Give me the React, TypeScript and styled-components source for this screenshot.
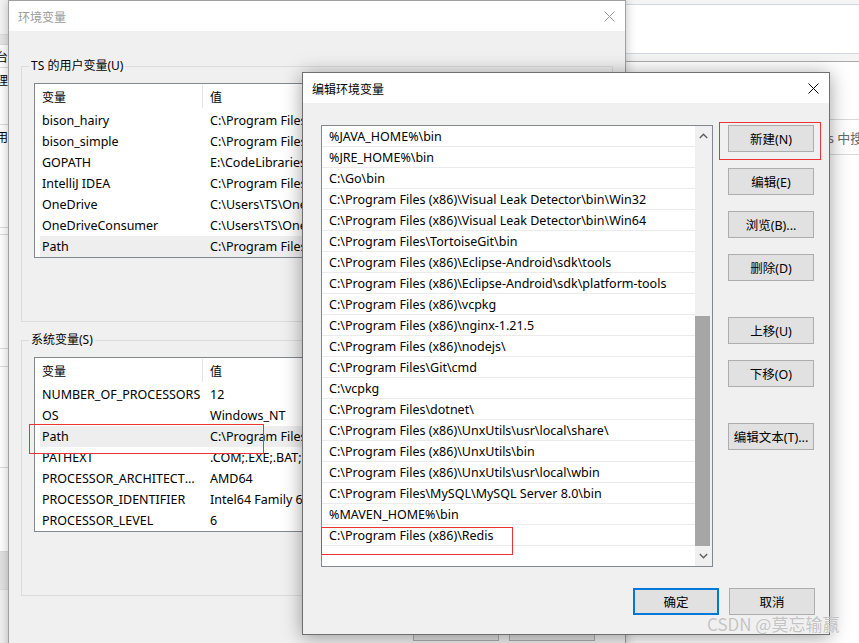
import React from "react";
import styled, { createGlobalStyle } from "styled-components";

const GlobalStyle = createGlobalStyle`
  html, body { margin: 0; padding: 0; }
  body {
    font-family: "Noto Sans", "Noto Sans CJK SC", sans-serif;
    font-size: 12.5px;
    color: #000;
    background: #fff;
  }
  * { box-sizing: border-box; }
`;

const userVars = [
  ["bison_hairy", "C:\\Program Files\\bison\\bison.hairy"],
  ["bison_simple", "C:\\Program Files\\bison\\bison.simple"],
  ["GOPATH", "E:\\CodeLibraries\\Go"],
  ["IntelliJ IDEA", "C:\\Program Files\\JetBrains\\IntelliJ IDEA\\bin;"],
  ["OneDrive", "C:\\Users\\TS\\OneDrive"],
  ["OneDriveConsumer", "C:\\Users\\TS\\OneDrive"],
  ["Path", "C:\\Program Files\\Java\\jdk\\bin;"],
];

const sysVars = [
  ["NUMBER_OF_PROCESSORS", "12"],
  ["OS", "Windows_NT"],
  ["Path", "C:\\Program Files\\Java\\jdk\\bin;"],
  ["PATHEXT", ".COM;.EXE;.BAT;.CMD;.VBS;.VBE;.JS"],
  ["PROCESSOR_ARCHITECTURE", "AMD64"],
  ["PROCESSOR_IDENTIFIER", "Intel64 Family 6 Model 165"],
  ["PROCESSOR_LEVEL", "6"],
];

const paths = [
  "%JAVA_HOME%\\bin",
  "%JRE_HOME%\\bin",
  "C:\\Go\\bin",
  "C:\\Program Files (x86)\\Visual Leak Detector\\bin\\Win32",
  "C:\\Program Files (x86)\\Visual Leak Detector\\bin\\Win64",
  "C:\\Program Files\\TortoiseGit\\bin",
  "C:\\Program Files (x86)\\Eclipse-Android\\sdk\\tools",
  "C:\\Program Files (x86)\\Eclipse-Android\\sdk\\platform-tools",
  "C:\\Program Files (x86)\\vcpkg",
  "C:\\Program Files (x86)\\nginx-1.21.5",
  "C:\\Program Files (x86)\\nodejs\\",
  "C:\\Program Files\\Git\\cmd",
  "C:\\vcpkg",
  "C:\\Program Files\\dotnet\\",
  "C:\\Program Files (x86)\\UnxUtils\\usr\\local\\share\\",
  "C:\\Program Files (x86)\\UnxUtils\\bin",
  "C:\\Program Files (x86)\\UnxUtils\\usr\\local\\wbin",
  "C:\\Program Files\\MySQL\\MySQL Server 8.0\\bin",
  "%MAVEN_HOME%\\bin",
  "C:\\Program Files (x86)\\Redis",
  "",
];

const sideItems = [
  { h: 35, bg: "#f4f4f4", text: "" },
  { h: 10, bg: "#e6e6e6", text: "" },
  { h: 23, bg: "#fff", text: "台" },
  { h: 57, bg: "#fff", text: "理" },
  { h: 103, bg: "#fff", text: "用," },
  { h: 7, bg: "#fff", text: "" },
  { h: 114, bg: "#fff", text: "" },
  { h: 18, bg: "#fff", text: "" },
  { h: 101, bg: "#fff", text: "" },
  { h: 84, bg: "#fff", text: "" },
  { h: 38, bg: "#e2e2e2", text: "" },
  { h: 60, bg: "#f0f0f0", text: "" },
];

const Desktop = styled.div`
  position: relative;
  width: 859px;
  height: 643px;
  overflow: hidden;
  background: #fff;
`;

/* window in the back */
const Backdrop = styled.div`
  position: absolute;
  inset: 0;
  display: flex;
`;

const SidePane = styled.div`
  width: 8px;
  flex: none;
  overflow: hidden;
  display: flex;
  flex-direction: column;
`;

const SideItem = styled.div<{ $h: number; $bg: string }>`
  height: ${p => p.$h}px;
  background: ${p => p.$bg};
  border-bottom: 1px solid #dcdcdc;
  flex: none;
  font-size: 12px;
  line-height: 20px;
  padding-top: 2px;
  margin-left: -4px;
  white-space: nowrap;
  font-family: "Noto Sans CJK SC", sans-serif;
`;

const MainPane = styled.div`
  flex: 1;
  min-width: 0;
  display: flex;
  flex-direction: column;
`;

const TopBar = styled.div`
  height: 62px;
  padding-top: 4px;
  background: #f4f4f4;
  border-bottom: 1px solid #a9a9a9;
`;

const TopBarInner = styled.div`
  height: 50px;
  background: #fff;
  border-top: 1px solid #cfd7e2;
  border-bottom: 1px solid #cfd7e2;
`;

const SearchRow = styled.div`
  padding-top: 57px;
  display: flex;
`;

const SearchBox = styled.div`
  flex: none;
  margin-left: 735px;
  width: 200px;
  height: 36px;
  border: 1px solid #d9d9d9;
  padding-left: 18px;
  display: flex;
  align-items: center;
  color: #6a6a6a;
  font-size: 13px;
  white-space: nowrap;
`;

/* generic window chrome */
const Window = styled.div<{ $x: number; $y: number; $w: number; $h: number; $active?: boolean }>`
  position: absolute;
  left: ${p => p.$x}px;
  top: ${p => p.$y}px;
  width: ${p => p.$w}px;
  height: ${p => p.$h}px;
  background: #f0f0f0;
  border: 1px solid ${p => (p.$active ? "#6f6f6f" : "#a0a0a0")};
  box-shadow: ${p => (p.$active ? "0 2px 18px rgba(0,0,0,0.38)" : "0 0 10px rgba(0,0,0,0.25)")};
  display: flex;
  flex-direction: column;
`;

const TitleBar = styled.div<{ $active?: boolean }>`
  height: 30px;
  flex: none;
  background: #fff;
  display: flex;
  align-items: center;
  justify-content: space-between;
  padding: 0 10px 0 9px;
  color: ${p => (p.$active ? "#000" : "#9a9a9a")};
  font-family: "Noto Sans CJK SC", sans-serif;
  font-size: 12px;
`;

const CloseIcon: React.FC<{ color: string }> = ({ color }) => (
  <svg width="11" height="11" viewBox="0 0 11 11">
    <path d="M0.5 0.5 L10.5 10.5 M10.5 0.5 L0.5 10.5" stroke={color} strokeWidth="1" fill="none" />
  </svg>
);

/* 环境变量 dialog */
const EnvBody = styled.div`
  padding: 0 12px;
  display: flex;
  flex-direction: column;
`;

const Group = styled.fieldset<{ $top: number }>`
  margin: ${p => p.$top}px 0 0 0;
  padding: 9px 12px 0 12px;
  border: 1px solid #dcdcdc;
  height: 264px;
  min-width: 0;
`;

const Legend = styled.legend`
  margin-left: -5px;
  padding: 0 2px;
  line-height: 16px;
  font-size: 12px;
  font-family: "Noto Sans", "Noto Sans CJK SC", sans-serif;
`;

const VarList = styled.div`
  height: 175px;
  background: #fff;
  border: 1px solid #828790;
  overflow: hidden;
`;

const VarHeader = styled.div`
  height: 26px;
  display: grid;
  grid-template-columns: 168px 1fr;
  align-items: start;
`;

const HeaderCell = styled.div<{ $divider?: boolean }>`
  margin-top: 1px;
  padding-left: 7px;
  height: 23px;
  line-height: 23px;
  font-size: 12px;
  border-right: ${p => (p.$divider ? "1px solid #e5e5e5" : "none")};
  font-family: "Noto Sans CJK SC", sans-serif;
`;

const VarRow = styled.div<{ $selected?: boolean }>`
  height: 21px;
  margin-left: 5px;
  display: grid;
  grid-template-columns: 168px 1fr;
  align-items: center;
  background: ${p => (p.$selected ? "#eeeeee" : "transparent")};
  white-space: nowrap;
`;

const Cell = styled.div`
  padding: 0 6px 0 2px;
  overflow: hidden;
  text-overflow: ellipsis;
  line-height: 21px;
`;

const Footer = styled.div<{ $top: number; $right: number }>`
  display: flex;
  justify-content: flex-end;
  gap: 10px;
  padding: ${p => p.$top}px ${p => p.$right}px 0 0;
`;

const Button = styled.button<{ $primary?: boolean }>`
  width: 86px;
  height: 27px;
  padding: 0;
  background: #e1e1e1;
  border: ${p => (p.$primary ? "2px solid #0078d7" : "1px solid #adadad")};
  font-family: "Noto Sans", "Noto Sans CJK SC", sans-serif;
  font-size: 12.5px;
  color: #000;
  flex: none;
`;

/* 编辑环境变量 dialog */
const EditBody = styled.div`
  padding: 22px 14px 0 18px;
  display: grid;
  grid-template-columns: 392px 86px;
  column-gap: 15px;
`;

const PathList = styled.div`
  height: 442px;
  background: #fff;
  border: 1px solid #828790;
  display: flex;
  overflow: hidden;
`;

const PathRows = styled.div`
  flex: 1;
  overflow: hidden;
`;

const PathRow = styled.div`
  height: 21px;
  border-bottom: 1px solid #ebebeb;
  padding: 1px 0 0 7px;
  line-height: 20px;
  white-space: nowrap;
`;

const ScrollBar = styled.div`
  width: 17px;
  flex: none;
  background: #f0f0f0;
  display: flex;
  flex-direction: column;
`;

const ScrollArrow = styled.div`
  height: 20px;
  flex: none;
  display: flex;
  align-items: center;
  justify-content: center;
`;

const ScrollTrack = styled.div`
  flex: 1;
  display: flex;
  flex-direction: column;
  justify-content: flex-end;
`;

const ScrollThumb = styled.div`
  height: 230px;
  margin: 0 2px 0 0;
  background: #a6a6a6;
`;

const ButtonColumn = styled.div`
  display: flex;
  flex-direction: column;
  gap: 16px;
`;

const ButtonSpacer = styled.div`
  height: 4px;
`;

const Chevron: React.FC<{ up?: boolean }> = ({ up }) => (
  <svg width="9" height="6" viewBox="0 0 9 6">
    <polyline
      points={up ? "0.8,5 4.5,1.3 8.2,5" : "0.8,1 4.5,4.7 8.2,1"}
      stroke="#606060"
      strokeWidth="1.4"
      fill="none"
    />
  </svg>
);

/* annotations */
const Marker = styled.div<{ $x: number; $y: number; $w: number; $h: number }>`
  position: absolute;
  left: ${p => p.$x}px;
  top: ${p => p.$y}px;
  width: ${p => p.$w}px;
  height: ${p => p.$h}px;
  border: 1px solid #ec3434;
  pointer-events: none;
`;

const Watermark = styled.div`
  position: absolute;
  left: 707px;
  top: 611px;
  font-family: "Noto Sans CJK SC", sans-serif;
  font-size: 17px;
  line-height: 26px;
  color: #c3c3c3;
  text-shadow: 0 0 1px rgba(255, 255, 255, 0.9);
  white-space: nowrap;
`;

const VarTable: React.FC<{ rows: string[][]; selected: string }> = ({ rows, selected }) => (
  <VarList>
    <VarHeader>
      <HeaderCell $divider>变量</HeaderCell>
      <HeaderCell>值</HeaderCell>
    </VarHeader>
    {rows.map(([name, value]) => (
      <VarRow key={name} $selected={name === selected}>
        <Cell>{name}</Cell>
        <Cell>{value}</Cell>
      </VarRow>
    ))}
  </VarList>
);

const App: React.FC = () => {
  return (
    <>
      <GlobalStyle />
      <Desktop>
        <Backdrop>
          <SidePane>
            {sideItems.map((s, i) => (
              <SideItem key={i} $h={s.h} $bg={s.bg}>
                {s.text}
              </SideItem>
            ))}
          </SidePane>
          <MainPane>
            <TopBar>
              <TopBarInner />
            </TopBar>
            <SearchRow>
              <SearchBox>在 Windows 中搜索</SearchBox>
            </SearchRow>
          </MainPane>
        </Backdrop>

        <Window $x={8} $y={0} $w={618} $h={680}>
          <TitleBar>
            <span>环境变量</span>
            <CloseIcon color="#9a9a9a" />
          </TitleBar>
          <EnvBody>
            <Group $top={27}>
              <Legend>TS 的用户变量(U)</Legend>
              <VarTable rows={userVars} selected="Path" />
            </Group>
            <Group $top={10}>
              <Legend>系统变量(S)</Legend>
              <VarTable rows={sysVars} selected="Path" />
            </Group>
            <Footer $top={18} $right={18}>
              <Button>确定</Button>
              <Button>取消</Button>
            </Footer>
          </EnvBody>
        </Window>

        <Window $x={302} $y={72} $w={528} $h={563} $active>
          <TitleBar $active>
            <span>编辑环境变量</span>
            <CloseIcon color="#000" />
          </TitleBar>
          <EditBody>
            <PathList>
              <PathRows>
                {paths.map((p, i) => (
                  <PathRow key={i}>{p}</PathRow>
                ))}
              </PathRows>
              <ScrollBar>
                <ScrollArrow>
                  <Chevron up />
                </ScrollArrow>
                <ScrollTrack>
                  <ScrollThumb />
                </ScrollTrack>
                <ScrollArrow>
                  <Chevron />
                </ScrollArrow>
              </ScrollBar>
            </PathList>
            <ButtonColumn>
              <Button>新建(N)</Button>
              <Button>编辑(E)</Button>
              <Button>浏览(B)...</Button>
              <Button>删除(D)</Button>
              <ButtonSpacer />
              <Button>上移(U)</Button>
              <Button>下移(O)</Button>
              <ButtonSpacer />
              <Button>编辑文本(T)...</Button>
            </ButtonColumn>
          </EditBody>
          <Footer $top={21} $right={14}>
            <Button $primary>确定</Button>
            <Button>取消</Button>
          </Footer>
        </Window>

        <Marker $x={29} $y={424} $w={235} $h={30} />
        <Marker $x={719} $y={122} $w={102} $h={38} />
        <Marker $x={321} $y={527} $w={192} $h={28} />
        <Watermark>CSDN @莫忘输赢</Watermark>
      </Desktop>
    </>
  );
};

export default App;
